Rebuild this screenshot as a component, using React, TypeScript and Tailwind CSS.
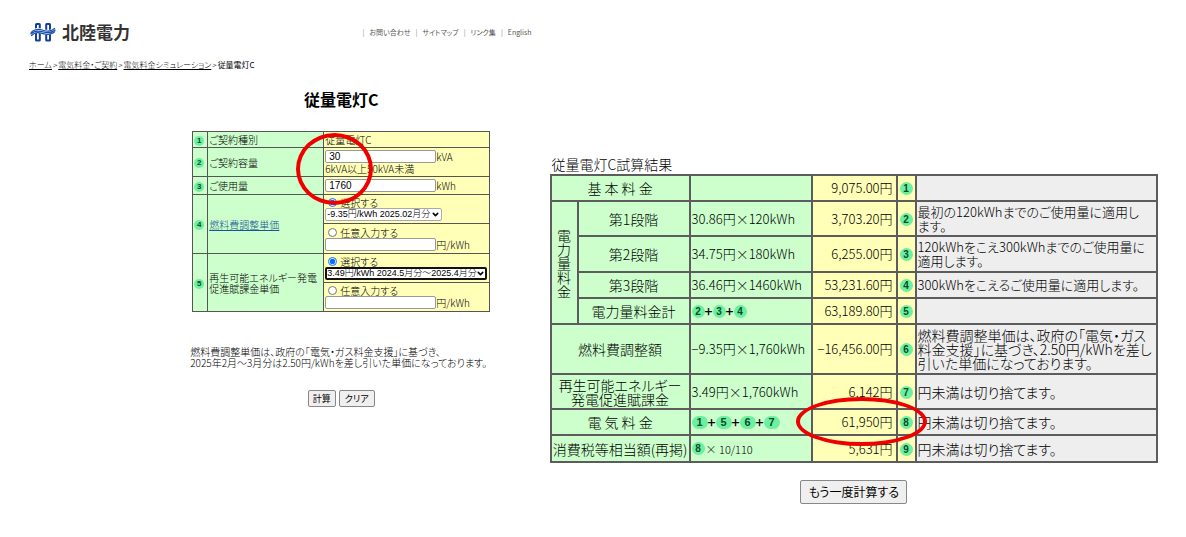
import { useState } from 'react';
import type { ReactNode } from 'react';
import clsx from 'clsx';
import { ChevronDown } from 'lucide-react';

type ResultRow = {
  label: ReactNode;
  formula?: ReactNode;
  amount: string;
  no: number;
  note?: string;
  height: string;
  // 電力量料金の内訳行
  sub?: boolean;
};

function Badge({ no, size = 'md' }: { no: number; size?: 'sm' | 'md' | 'wide' }) {
  return (
    <span
      className={clsx(
        'inline-flex items-center justify-center rounded-full bg-[#6cf0a0] align-middle font-["Liberation_Sans",sans-serif] font-bold text-[#0b4a2a]',
        size === 'sm' && 'h-[10px] w-[10px] text-[8px] leading-[10px]',
        size === 'md' && 'h-[13px] w-[13px] text-[10px] leading-[13px]',
        size === 'wide' && 'h-[13px] w-4 text-[11px] leading-[13px]',
      )}
    >
      {no}
    </span>
  );
}

function BadgeSum({ items, wide }: { items: number[]; wide?: boolean }) {
  return (
    <span className="flex items-center">
      {items.map((no, i) => (
        <span key={no} className="flex items-center">
          {i > 0 && <span className="w-2 text-center text-[14px] font-medium leading-[13px]">+</span>}
          <Badge no={no} size={wide ? 'wide' : 'md'} />
        </span>
      ))}
    </span>
  );
}

function Logo() {
  return (
    <svg viewBox="0 0 26 20" className="h-5 w-[26px]" fill="none" aria-hidden="true">
      <g stroke="#123f9c" strokeWidth="2">
        <rect x="6" y="2" width="3.800" height="16.400" rx="0.500" />
        <rect x="16.200" y="2" width="3.800" height="16.400" rx="0.500" />
      </g>
      <path
        d="M.5 12C5 7 9 8.300 13 9.600S21 11.500 25.500 7.500"
        stroke="#fff"
        strokeWidth="4.800"
      />
      <g stroke="#1b4fae" strokeWidth="1.200">
        <path d="M.8 10.800C5 6.300 9 7 13 8.200S20 10 25 6.200" />
        <path d="M.5 12.200C5 7.900 9 8.700 13 9.900S21 11.800 25.500 7.700" />
        <path d="M1.200 13.800C5.500 9.600 9 10.400 13 11.600S21 13.500 25 9.400" />
      </g>
    </svg>
  );
}

const navLinks = ['お問い合わせ', 'サイトマップ', 'リンク集', 'English'];
const crumbs = ['ホーム', '電気料金・ご契約', '電気料金シミュレーション'];

const rows: ResultRow[] = [
  { label: '基 本 料 金', amount: '9,075.00円', no: 1, height: 'h-[26px]' },
  {
    label: '第1段階',
    formula: '30.86円×120kWh',
    amount: '3,703.20円',
    no: 2,
    note: '最初の120kWhまでのご使用量に適用し\nます。',
    height: 'h-[35px]',
    sub: true,
  },
  {
    label: '第2段階',
    formula: '34.75円×180kWh',
    amount: '6,255.00円',
    no: 3,
    note: '120kWhをこえ300kWhまでのご使用量に\n適用します。',
    height: 'h-[36px]',
    sub: true,
  },
  {
    label: '第3段階',
    formula: '36.46円×1460kWh',
    amount: '53,231.60円',
    no: 4,
    note: '300kWhをこえるご使用量に適用します。',
    height: 'h-[26px]',
    sub: true,
  },
  {
    label: '電力量料金計',
    formula: <BadgeSum items={[2, 3, 4]} />,
    amount: '63,189.80円',
    no: 5,
    height: 'h-[26px]',
    sub: true,
  },
  {
    label: '燃料費調整額',
    formula: '−9.35円×1,760kWh',
    amount: '−16,456.00円',
    no: 6,
    note: '燃料費調整単価は、政府の「電気・ガス\n料金支援」に基づき、2.50円/kWhを差し\n引いた単価になっております。',
    height: 'h-[50px]',
  },
  {
    label: (
      <>
        再生可能エネルギー
        <br />
        発電促進賦課金
      </>
    ),
    formula: '3.49円×1,760kWh',
    amount: '6,142円',
    no: 7,
    note: '円未満は切り捨てます。',
    height: 'h-[35px]',
  },
  {
    label: '電 気 料 金',
    formula: <BadgeSum items={[1, 5, 6, 7]} wide />,
    amount: '61,950円',
    no: 8,
    note: '円未満は切り捨てます。',
    height: 'h-[26px]',
  },
  {
    label: '消費税等相当額(再掲)',
    formula: (
      <span className="flex items-center gap-px text-[11px]">
        <Badge no={8} />× 10/110
      </span>
    ),
    amount: '5,631円',
    no: 9,
    note: '円未満は切り捨てます。',
    height: 'h-[27px]',
  },
];

const cell = 'border border-[#555] px-px py-0';
const bigCell = 'border-2 border-[#5c5c5c] p-px';
const textBox =
  'h-[13px] w-[111px] rounded-[2px] border border-[#999] bg-white px-[3px] font-["Liberation_Sans",sans-serif] text-[10px] leading-[11px] text-black';

function RateSelect({
  id,
  label,
  option,
  focused,
}: {
  id: string;
  label: string;
  option: string;
  focused?: boolean;
}) {
  return (
    <span className={clsx('relative flex', focused ? 'w-[162px]' : 'w-[117px]')}>
      <select
        id={id}
        aria-label={label}
        className={clsx(
          'h-[13px] w-full appearance-none rounded-[2px] bg-white font-["Liberation_Sans","Noto_Sans_CJK_JP",sans-serif] text-[9px] text-black',
          focused ? 'border-2 border-[#111] leading-[9px]' : 'border border-[#aaa] px-px leading-[11px]',
        )}
      >
        <option>{option}</option>
      </select>
      <ChevronDown
        className="pointer-events-none absolute right-[2px] top-[2px] h-[9px] w-[9px]"
        strokeWidth={4}
      />
    </span>
  );
}

function RateRadio({
  name,
  label,
  checked,
  onSelect,
}: {
  name: string;
  label: string;
  checked: boolean;
  onSelect: () => void;
}) {
  return (
    <label className="flex items-center gap-[3px] pl-[3px] leading-[11px]">
      <input
        type="radio"
        name={name}
        checked={checked}
        onChange={onSelect}
        className="h-[9px] w-[9px] accent-[#0b6cff]"
      />
      {label}
    </label>
  );
}

type RateProps = {
  name: string;
  mode: string;
  setMode: (mode: string) => void;
};

function RateChoice({ name, mode, setMode, option, focused }: RateProps & { option: string; focused?: boolean }) {
  return (
    <>
      <RateRadio
        name={name}
        label="選択する"
        checked={mode === 'select'}
        onSelect={() => setMode('select')}
      />
      <RateSelect id={`${name}-rate`} label="単価" option={option} focused={focused} />
    </>
  );
}

function RateManual({ name, mode, setMode }: RateProps) {
  return (
    <>
      <RateRadio
        name={name}
        label="任意入力する"
        checked={mode === 'manual'}
        onSelect={() => setMode('manual')}
      />
      <span className="flex items-center">
        <input aria-label="任意単価" className={textBox} />
        円/kWh
      </span>
    </>
  );
}

function ContractForm() {
  const [fuelMode, setFuelMode] = useState('select');
  const [levyMode, setLevyMode] = useState('select');

  return (
    <form className="flex flex-col items-center" onSubmit={(e) => e.preventDefault()}>
      <div className="relative">
        <table className="w-[298px] table-fixed border-collapse text-[10px] leading-[11px] text-black">
          <colgroup>
            <col className="w-[15px]" />
            <col className="w-[116px]" />
            <col />
          </colgroup>
          <tbody className="[&_td]:bg-[#ffffb8] [&_th]:bg-[#ccffcc] [&_th]:text-left [&_th]:font-light">
            <tr className="h-[16px]">
              <th className={cell}><Badge no={1} size="sm" /></th>
              <th className={cell}>ご契約種別</th>
              <td className={cell}>従量電灯C</td>
            </tr>
            <tr className="h-[29px]">
              <th className={cell}><Badge no={2} size="sm" /></th>
              <th className={cell}><label htmlFor="capacity">ご契約容量</label></th>
              <td className={cell}>
                <span className="flex items-center">
                  <input id="capacity" defaultValue="30" className={textBox} />
                  kVA
                </span>
                6kVA以上50kVA未満
              </td>
            </tr>
            <tr className="h-[18px]">
              <th className={cell}><Badge no={3} size="sm" /></th>
              <th className={cell}><label htmlFor="usage">ご使用量</label></th>
              <td className={cell}>
                <span className="flex items-center">
                  <input id="usage" defaultValue="1760" className={textBox} />
                  kWh
                </span>
              </td>
            </tr>
            <tr className="h-[29px]">
              <th rowSpan={2} className={cell}><Badge no={4} size="sm" /></th>
              <th rowSpan={2} className={cell}>
                <a href="#fuel" className="text-[#1a5596] underline">燃料費調整単価</a>
              </th>
              <td className={cell}>
                <RateChoice
                  name="fuel"
                  option="-9.35円/kWh 2025.02月分"
                  mode={fuelMode}
                  setMode={setFuelMode}
                />
              </td>
            </tr>
            <tr className="h-[30px]">
              <td className={cell}>
                <RateManual name="fuel" mode={fuelMode} setMode={setFuelMode} />
              </td>
            </tr>
            <tr className="h-[29px]">
              <th rowSpan={2} className={cell}><Badge no={5} size="sm" /></th>
              <th rowSpan={2} className={cell}>
                再生可能エネルギー発電
                <br />
                促進賦課金単価
              </th>
              <td className={cell}>
                <RateChoice
                  name="levy"
                  option="3.49円/kWh 2024.5月分～2025.4月分"
                  focused
                  mode={levyMode}
                  setMode={setLevyMode}
                />
              </td>
            </tr>
            <tr className="h-[29px]">
              <td className={cell}>
                <RateManual name="levy" mode={levyMode} setMode={setLevyMode} />
              </td>
            </tr>
          </tbody>
        </table>
        <span className="pointer-events-none absolute left-[104px] top-[2px] h-[72px] w-[77px] rounded-[50%] border-4 border-[#ee0000]" />
      </div>

      <p className="mt-[34px] w-[302px] whitespace-nowrap text-[10px] leading-[11px] text-black">
        燃料費調整単価は、政府の「電気・ガス料金支援」に基づき、
        <br />
        2025年2月～3月分は2.50円/kWhを差し引いた単価になっております。
      </p>

      <div className="mt-[22px] flex gap-[3px] text-[9px] font-normal leading-[15px] text-black">
        <button type="submit" className="h-[17px] w-7 rounded-[2px] border border-[#888] bg-[#efefef]">
          計算
        </button>
        <button type="reset" className="h-[17px] w-9 rounded-[2px] border border-[#888] bg-[#efefef]">
          クリア
        </button>
      </div>
    </form>
  );
}

function ResultTable() {
  return (
    <div className="relative">
      <table className="w-full table-fixed border-collapse text-[13px] leading-[14px] text-black">
        <caption className="pb-[2px] pl-[2px] text-left text-[14px] leading-[16px]">従量電灯C試算結果</caption>
        <colgroup>
          <col className="w-[27px]" />
          <col className="w-[112px]" />
          <col className="w-[122px]" />
          <col className="w-[85px]" />
          <col className="w-[19px]" />
          <col />
        </colgroup>
        <tbody>
          {rows.map((row, index) => (
            <tr key={row.no} className={row.height}>
              {index === 1 && (
                <th rowSpan={4} className={clsx(bigCell, 'bg-[#ccffcc] px-[4px] text-[14px] font-light')}>
                  電力量料金
                </th>
              )}
              <th
                colSpan={row.sub ? 1 : 2}
                className={clsx(bigCell, 'whitespace-nowrap bg-[#ccffcc] text-center text-[14px] font-light')}
              >
                {row.label}
              </th>
              <td className={clsx(bigCell, 'whitespace-nowrap bg-[#ccffcc]')}>{row.formula}</td>
              <td className={clsx(bigCell, 'whitespace-nowrap bg-[#ffffb8] pr-[3px] text-right')}>{row.amount}</td>
              <td className={clsx(bigCell, 'bg-[#ffffb8] text-center')}>
                <Badge no={row.no} />
              </td>
              <td
                className={clsx(
                  bigCell,
                  'whitespace-pre-line bg-[#eeeeee]',
                  !row.sub && 'text-[14px]',
                )}
              >
                {row.note}
              </td>
            </tr>
          ))}
        </tbody>
      </table>
      <span className="pointer-events-none absolute left-[246px] top-[241px] h-[49px] w-[131px] rounded-[50%] border-4 border-[#ee0000]" />
    </div>
  );
}

export default function App() {
  return (
    <main className="flex min-h-screen bg-white font-['Noto_Sans_CJK_JP',sans-serif] font-light [font-feature-settings:'palt']">
      <section className="w-[46%] shrink-0">
        <header className="flex items-center justify-between pl-[30px] pr-[14px] pt-[22px]">
          <a href="#home" className="flex items-center gap-[6px] text-[17px] font-bold leading-5 text-[#333]">
            <Logo />
            北陸電力
          </a>
          <nav className="flex gap-[5px] text-[7px] font-normal leading-[10px] text-[#555]">
            {navLinks.map((link) => (
              <span key={link} className="flex gap-[5px]">
                <span className="text-[#888]">|</span>
                <a href="#nav">{link}</a>
              </span>
            ))}
          </nav>
        </header>

        <nav className="mt-[17px] flex gap-px pl-[29px] text-[8px] leading-[12px] text-black">
          {crumbs.map((crumb) => (
            <span key={crumb} className="flex gap-px">
              <a href="#crumb" className="underline">{crumb}</a>
              <span>&gt;</span>
            </span>
          ))}
          <span className="font-normal">従量電灯C</span>
        </nav>

        <div className="pl-[137px] pt-[18px]">
          <h1 className="mb-[22px] text-center text-[16px] font-bold leading-5 text-black">従量電灯C</h1>
          <ContractForm />
        </div>
      </section>

      <section className="min-w-0 flex-1 pl-[4px] pr-[28px] pt-[156px]">
        <ResultTable />
        <div className="mt-[15px] text-center">
          <button
            type="button"
            className="h-6 w-[107px] rounded-[2px] border border-[#888] bg-[#efefef] text-[12px] font-normal leading-[20px] text-black"
          >
            もう一度計算する
          </button>
        </div>
      </section>
    </main>
  );
}
